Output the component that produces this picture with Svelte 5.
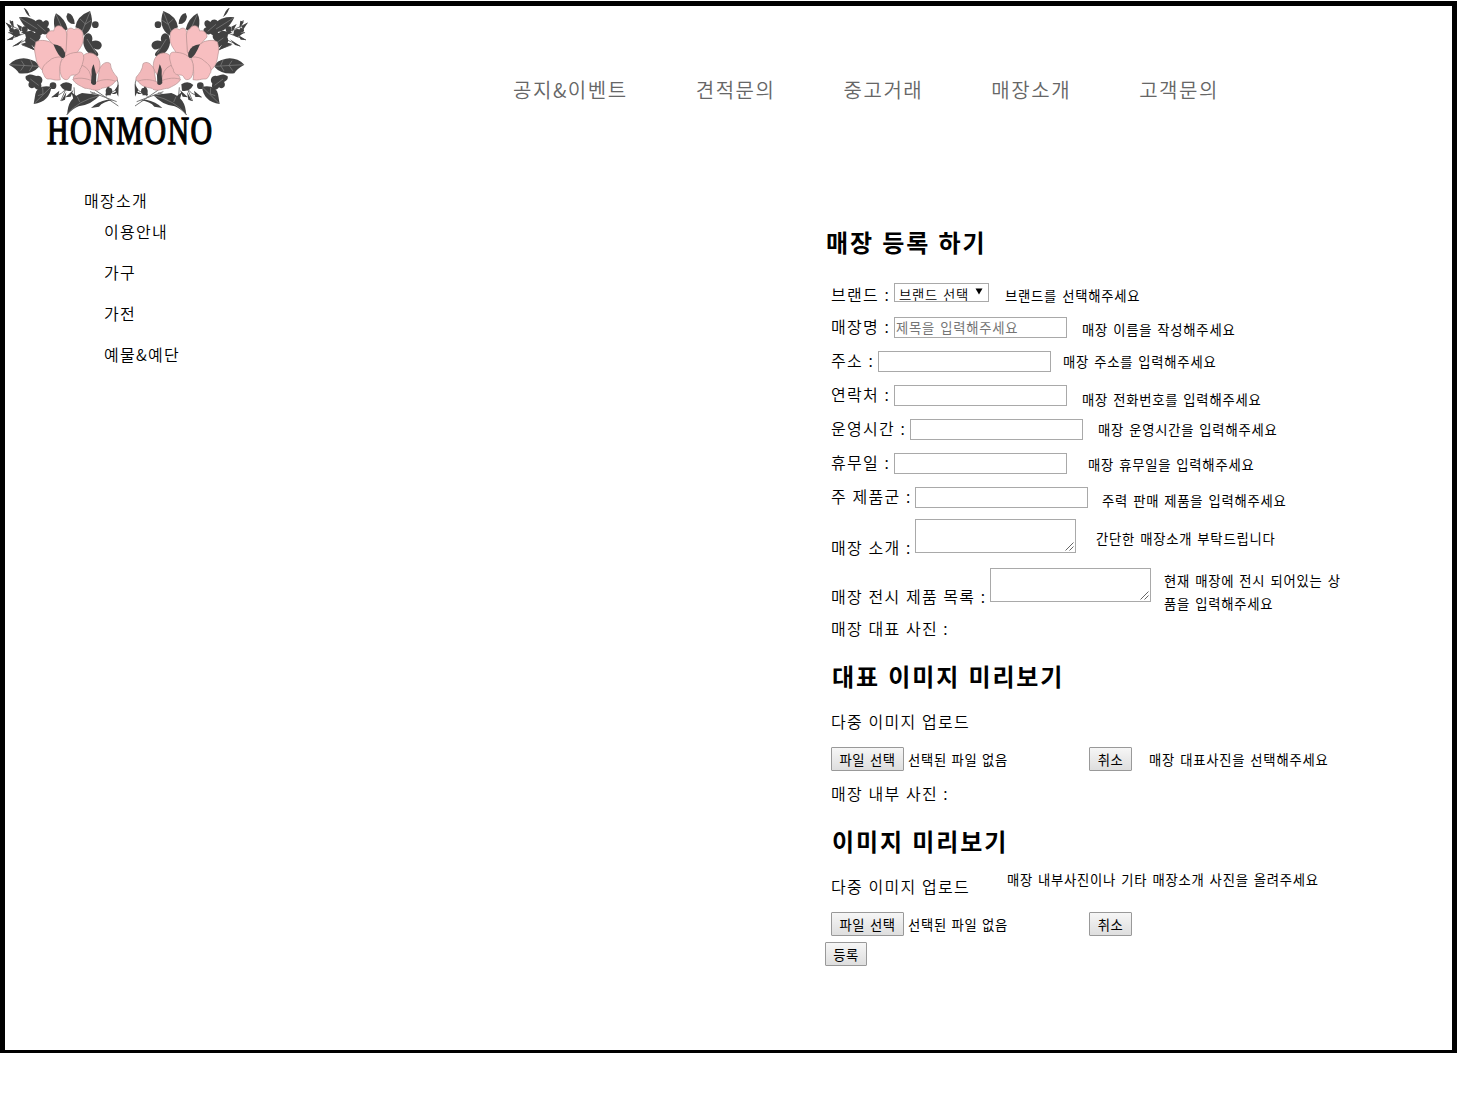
<script>
  const menu = ['공지&이벤트', '견적문의', '중고거래', '매장소개', '고객문의'];
  const side = ['이용안내', '가구', '가전', '예물&예단'];
  const fields = [
    { id: 'name', label: '매장명 :', hint: '매장 이름을 작성해주세요', placeholder: '제목을 입력해주세요' },
    { id: 'address', label: '주소 :', hint: '매장 주소를 입력해주세요' },
    { id: 'phone', label: '연락처 :', hint: '매장 전화번호를 입력해주세요' },
    { id: 'hours', label: '운영시간 :', hint: '매장 운영시간을 입력해주세요' },
    { id: 'closed', label: '휴무일 :', hint: '매장 휴무일을 입력해주세요' },
    { id: 'goods', label: '주 제품군 :', hint: '주력 판매 제품을 입력해주세요' }
  ];
  const areas = [
    { id: 'intro', label: '매장 소개 :', hint: '간단한 매장소개 부탁드립니다' },
    { id: 'display', label: '매장 전시 제품 목록 :', hint: '현재 매장에 전시 되어있는 상품을 입력해주세요' }
  ];
</script>

{#snippet bouquet()}
  <g class="twig">
    <path d="M72 24 L90 50 M18 70 Q50 85 95 105 M22 120 L80 98 M40 138 L100 110 M66 135 L108 150 M25 98 L60 102 M30 60 L45 105 M285 270 L355 318 M270 275 L350 305 M325 250 Q330 275 318 290 M350 235 Q365 265 330 280 M155 292 Q190 285 205 255 M182 303 L200 262 M225 300 L222 262 M200 345 Q225 295 285 278" />
  </g>
  <g class="leaf">
    <path d="M57 52 Q92 48 112 68 L110 96 Q78 96 57 52Z" />
    <path d="M73 24 Q86 32 88 49 Q76 40 73 24Z" />
    <path d="M168 40 Q195 55 203 88 Q190 98 164 84 Q158 60 168 40Z" />
    <path d="M203 39 Q222 42 224 72 Q203 73 199 50Z" />
    <path d="M270 33 Q230 48 226 82 Q248 88 251 107 Q288 82 270 33Z" />
    <path d="M27 194 Q50 171 82 176 Q112 181 117 200 Q96 224 57 220 Q52 208 27 194Z" />
    <path d="M154 260 Q113 253 106 282 L101 312 Q150 304 154 260Z" />
    <path d="M202 344 Q202 294 246 279 L300 285 Q275 314 236 319 Q220 324 202 344Z" />
    <path d="M273 324 Q292 304 322 299 L340 300 Q308 305 297 320Z" />
    <path d="M106 88 C92 64 120 48 129 66 C143 52 154 70 141 82 C160 88 143 110 128 101 C116 113 102 102 106 88Z" />
    <path d="M78 112 C70 96 93 84 103 99 C119 90 129 109 116 121 C128 139 104 151 96 136 C82 142 70 126 78 112Z" />
    <path d="M254 106 C266 90 282 106 276 124 C295 115 313 131 302 144 C294 154 280 145 276 140 C292 155 303 165 288 170 C265 166 247 142 250 119Z" />
    <path d="M77 229 C91 218 101 226 111 228 C124 225 133 240 123 251 C129 267 112 276 103 262 C91 270 80 257 88 246 Q74 240 77 229Z" />
    <circle cx="286" cy="74" r="10" /><circle cx="159" cy="257" r="10" />
    <path d="M180 255 Q196 239 216 253 L214 272 Q192 277 180 255Z" />
    <circle cx="327" cy="273" r="10" /><circle cx="48" cy="98" r="11" /><circle cx="74" cy="88" r="9" /><circle cx="35" cy="91" r="7" />
    <path d="M16 67 L35 79 L31 90Z M21 120 L44 106 L38 119Z M36 140 L70 118 L55 135Z M62 132 L88 125 L106 152Z M28 65 L42 84 L39 62Z M50 72 L62 95 L66 80Z M24 96 L50 103 L66 101 L48 112Z M62 96 L84 94 L80 106Z M155 291 L178 272 L174 291Z M183 304 L199 276 L195 299Z M222 303 L214 276 L232 290Z M316 286 L324 248 L333 286Z M345 270 L356 252 L355 290Z M196 292 L220 270 L212 290Z M333 282 L354 272 L346 282Z" />
  </g>
  <path class="vein" d="M58 53 L112 87 M270 35 L245 98 M240 57 L255 71 M273 61 L254 74 M28 194 L116 199 M64 182 L73 196 L62 212 M91 180 L98 197 L88 213 M153 261 L103 310 M128 263 L129 282 L114 287 M203 342 Q234 302 298 287 M232 290 L239 306 M168 43 L187 86 M90 114 L112 129 M112 73 L137 94 M261 117 L288 160 M91 237 L116 256" />
  <g class="petal back">
    <path d="M245 180 C246 161 267 155 280 161 C298 168 304 194 298 210 L281 236 L243 209Z" />
    <path d="M298 208 C307 188 321 183 331 191 C332 209 343 222 351 231 C356 245 345 244 329 246 Q310 252 292 247Z" />
    <path d="M247 196 Q274 207 275 246 L223 239 C214 231 229 225 234 216 L242 202Z" />
    <path d="M218 238 C242 230 270 237 285 248 C308 235 335 238 346 244 C328 269 304 260 301 268 C284 276 270 264 255 265 C242 258 225 252 218 238Z" />
  </g>
  <g class="petal">
    <path d="M181 158 L139 111 C139 95 153 90 161 93 C164 74 183 72 191 87 C204 90 201 116 199 154 L190 172Z" />
    <path d="M190 172 L198 155 L201 103 C197 86 212 79 222 89 C236 79 252 94 249 108 C254 130 238 147 231 158Z" />
    <path d="M188 170 L128 212 C106 191 109 175 105 159 C101 144 106 137 107 127 C117 118 136 121 148 125 Q175 139 188 170Z" />
    <path d="M187 171 C181 192 176 217 181 239 C164 243 157 236 148 237 C133 239 133 222 128 218 C124 203 133 193 147 183 Q160 169 187 171Z" />
    <path d="M180 200 C180 174 204 158 231 157 C248 153 252 162 251 177 C248 188 246 201 240 208 C240 220 230 226 219 225 C206 225 210 238 200 239 C185 240 179 221 180 200Z" />
  </g>
  <g class="leaf">
    <path d="M160 133 Q186 134 195 158 Q198 175 186 174 Q175 169 160 133Z" />
    <path d="M281 193 Q273 204 275 223 L273 249 Q280 260 288 252 L289 226Z" />
  </g>
{/snippet}

<div class="frame">
  <header>
    <svg class="logo" viewBox="15 18 735 432" role="img" aria-label="HONMONO">
      {@render bouquet()}
      <g transform="translate(760 0) scale(-1 1)">{@render bouquet()}</g>
      <text x="141" y="432" textLength="500" lengthAdjust="spacingAndGlyphs">HONMONO</text>
    </svg>
    <nav>
      {#each menu as item}<span>{item}</span>{/each}
    </nav>
  </header>

  <div class="body">
    <aside>
      <p>매장소개</p>
      <ul>
        {#each side as item}<li>{item}</li>{/each}
      </ul>
    </aside>

    <main>
      <h2 class="title">매장 등록 하기</h2>
      <div class="fields">
        <div class="row brand">
          <label for="brand">브랜드 :</label>
          <div class="select" id="brand"><span>브랜드 선택</span>
            <svg viewBox="0 0 8 7"><path d="M0.5 0.5H7.5L4 6.5Z" /></svg>
          </div>
          <span class="hint">브랜드를 선택해주세요</span>
        </div>
        {#each fields as f}
          <div class="row {f.id}">
            <label for={f.id}>{f.label}</label>
            <input id={f.id} type="text" placeholder={f.placeholder} />
            <span class="hint">{f.hint}</span>
          </div>
        {/each}
        {#each areas as a}
          <div class="row area {a.id}">
            <label for={a.id}>{a.label}</label>
            <div class="box"><textarea id={a.id}></textarea>
              <svg viewBox="0 0 9 9"><path d="M0.5 8.5L8.5 0.5M4.5 8.5L8.5 4.5" /></svg>
            </div>
            <span class="hint">{a.hint}</span>
          </div>
        {/each}

        <p class="caption">매장 대표 사진 :</p>
        <h2>대표 이미지 미리보기</h2>
        <p class="multi">다중 이미지 업로드</p>
        <div class="upload">
          <button class="pick">파일 선택</button><span class="none">선택된 파일 없음</span>
          <button class="cancel">취소</button>
          <span class="hint">매장 대표사진을 선택해주세요</span>
        </div>
        <p class="caption second">매장 내부 사진 :</p>
        <h2>이미지 미리보기</h2>
        <div class="multi"><span>다중 이미지 업로드</span><span class="hint">매장 내부사진이나 기타 매장소개 사진을 올려주세요</span></div>
        <div class="upload">
          <button class="pick">파일 선택</button><span class="none">선택된 파일 없음</span>
          <button class="cancel">취소</button>
        </div>
      </div>
      <button class="submit">등록</button>
    </main>
  </div>
</div>

<style>
  :global(body) { background: #fff; }
  .frame {
    box-sizing: border-box;
    width: 1457px;
    height: 1052px;
    margin-top: 1px;
    border: solid #000;
    border-width: 5px 5px 3px;
    color: #000;
    font: 350 16px/24px "Noto Sans CJK KR", sans-serif;
    letter-spacing: 1.28px;
    word-spacing: 0.6px;
    white-space: nowrap;
  }
  p, h2, ul { margin: 0; padding: 0; }
  li { list-style: none; }

  header { display: flex; height: 170px; }
  .logo { width: 245px; height: 144px; flex: none; overflow: visible; }
  .leaf { fill: #414141; }
  .twig { fill: none; stroke: #777; stroke-width: 3; }
  .vein { fill: none; stroke: #858585; stroke-width: 2; }
  .petal { fill: #f7bec0; stroke: #b58f90; stroke-width: 2; }
  .petal.back { fill: #f2b8ba; }
  .logo text {
    font-family: "Liberation Serif", serif;
    font-size: 120px;
    font-weight: 400;
    letter-spacing: 6px;
    fill: #000;
    stroke: #000;
    stroke-width: 4;
  }
  nav {
    display: flex;
    gap: 68px;
    padding: 69px 0 0 263px;
    font-size: 20px;
    line-height: 30px;
    letter-spacing: 1.55px;
    color: #666;
  }

  .body { display: flex; }
  aside { width: 741px; padding: 12px 0 0 79px; }
  aside ul { padding: 7px 0 0 20px; }
  aside li { height: 41px; }

  main { padding-top: 48px; }
  h2 {
    padding-left: 1px;
    font-size: 24px;
    line-height: 36px;
    font-weight: 700;
    letter-spacing: 1.9px;
    word-spacing: 0.9px;
  }
  .fields { padding: 17px 0 0 6px; }
  .row { display: flex; height: 34px; align-items: flex-start; }
  label { width: 63px; margin-top: 3px; flex: none; }
  .brand label { margin-top: 5px; }
  input, textarea, .select {
    box-sizing: border-box;
    border: 1px solid #a9a9a9;
    border-radius: 0;
    background: #fff;
    margin: 0;
  }
  input {
    width: 173px;
    height: 21px;
    margin-top: 6px;
    padding: 0 1px;
    font: 400 13.33px/19px "Noto Sans CJK KR", sans-serif;
    letter-spacing: 0.75px;
    word-spacing: 1.4px;
  }
  input::placeholder { color: #757575; opacity: 1; }
  .select {
    display: flex;
    width: 95px;
    height: 19px;
    margin-top: 6px;
    padding: 0 5px 0 4px;
    justify-content: space-between;
    overflow: hidden;
    font-size: 13.33px;
    line-height: 22px;
    letter-spacing: 0.7px;
    word-spacing: 1.4px;
  }
  .select svg { width: 8px; height: 7px; margin-top: 4px; }
  .hint {
    margin: 7px 0 0 15px;
    font-size: 13.33px;
    font-weight: 400;
    line-height: 23px;
    letter-spacing: 0.75px;
    word-spacing: 1.4px;
  }
  .brand .hint { margin-left: 16px; }
  .address label { width: 47px; }
  .address .hint { margin: 5px 0 0 12px; }
  .phone .hint { margin-top: 9px; }
  .hours label { width: 79px; }
  .hours .hint { margin-top: 5px; }
  .closed .hint { margin: 6px 0 0 21px; }
  .goods label { width: 84px; }
  .goods .hint { margin: 8px 0 0 14px; }

  .area { height: 49px; }
  .area label { width: 84px; margin-top: 20px; }
  .area.display label { width: 159px; }
  .box { position: relative; width: 161px; height: 34px; margin-top: 4px; flex: none; }
  textarea { display: block; width: 161px; height: 34px; resize: none; }
  .box svg { position: absolute; right: 2px; bottom: 2px; width: 9px; height: 9px; }
  .box path { stroke: #666; stroke-width: 1; fill: none; }
  .intro .hint { margin: 12px 0 0 20px; }
  .area.display .hint { margin: 5px 0 0 13px; width: 182px; white-space: normal; word-break: break-all; }

  .caption { height: 45px; padding-top: 3px; box-sizing: border-box; }
  .caption.second { padding-top: 10px; height: 52px; }
  .fields h2 { height: 51px; }
  .multi { display: flex; height: 38px; }
  .multi .hint { margin: -6px 0 0 37px; }
  .upload { display: flex; height: 24px; align-items: flex-start; }
  button {
    box-sizing: border-box;
    height: 24px;
    padding: 0;
    border: 1px solid #999;
    border-radius: 1px;
    background: linear-gradient(#f6f6f6, #dedede);
    color: #000;
    font: 400 13.33px/24px "Noto Sans CJK KR", sans-serif;
    letter-spacing: 0.6px;
    word-spacing: 1.2px;
  }
  .pick { width: 73px; }
  .none {
    width: 181px;
    margin: 1px 0 0 4px;
    font-size: 13.33px;
    font-weight: 400;
    letter-spacing: 0.7px;
    word-spacing: 0.9px;
  }
  .cancel { width: 43px; }
  .upload .hint { margin: 1px 0 0 17px; }
  .submit { display: block; width: 42px; margin-top: 6px; }
</style>
